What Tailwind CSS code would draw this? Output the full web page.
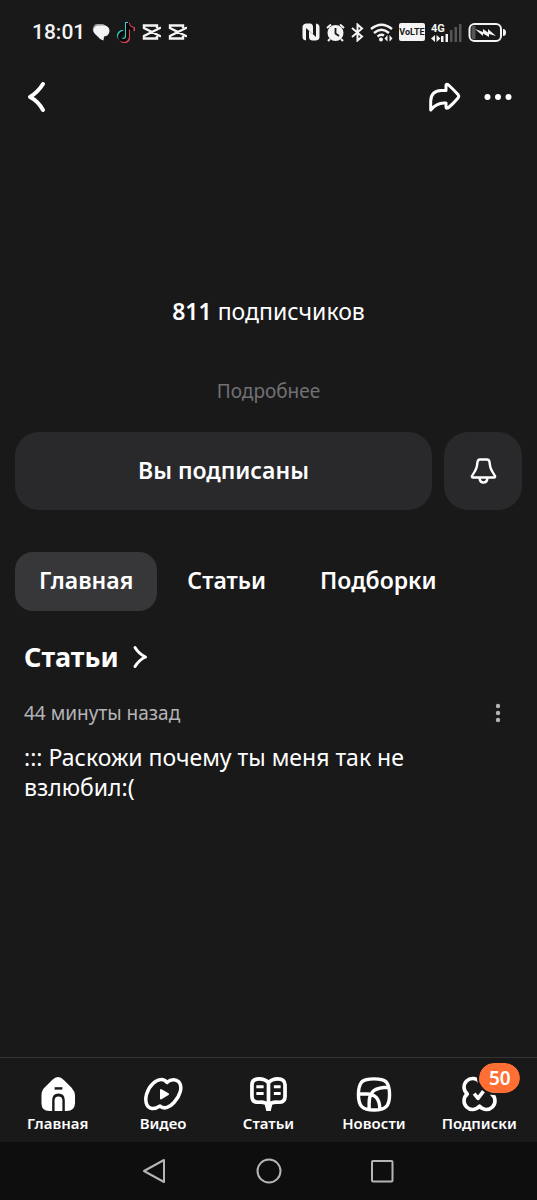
<!DOCTYPE html>
<html lang="ru">
<head>
<meta charset="utf-8">
<meta name="viewport" content="width=device-width, initial-scale=1">
<title>Канал</title>
<script src="https://cdn.jsdelivr.net/npm/@tailwindcss/browser@4"></script>
</head>
<body class="flex min-h-screen flex-col bg-[#19191a] font-['Noto_Sans',sans-serif] text-white">

<!-- Status bar -->
<div class="flex h-16 shrink-0 items-center justify-between pl-8 pr-[31px] text-[#f4f4f4]">
  <div class="flex items-center gap-[7px]">
    <span class="font-['Roboto',sans-serif] text-[21px] leading-6 font-medium">18:01</span>
    <svg class="h-[18px] w-[18px]" viewBox="0 0 18 18" aria-hidden="true"><path d="M5 1H11Q16 3 16 8Q15 13 11 13L10 16Q5 14 3 11Q0 8 1 5Q2 1 5 1Z" fill="#999"/><path d="M6 2.500H13Q17.500 3.500 17.500 8Q17 13 12 13.500L11.500 17.500Q7 16 5 12.500Q1.500 10 1.500 7Q2 3 6 2.500Z" fill="#f4f4f4"/></svg>
    <svg class="h-[22px] w-[18px]" viewBox="0 0 18 22" fill="none" stroke-width="3" aria-hidden="true"><path d="M9.500 1V15A4 4 0 1 1 6 10.500M9.500 2Q11 7 16 7" stroke="#35cfc7"/><path d="M11.500 2V16A4 4 0 0 1 4 18.500M11.500 3Q13 7.500 17.500 7.500V10" stroke="#e0425a"/><path d="M10.500 2V15.500A4 4 0 1 1 7 11.500M10.500 3Q12 8 16.500 8" stroke="#080808"/></svg>
    <svg class="h-[16px] w-[19px]" viewBox="0 0 19 16" fill="none" stroke="currentColor" stroke-width="2.400" aria-hidden="true"><path d="M19 3.500L2 12V14.500H15V12M19 12.500L2 4V1.500H15V4"/></svg>
    <svg class="h-[16px] w-[19px]" viewBox="0 0 19 16" fill="none" stroke="currentColor" stroke-width="2.400" aria-hidden="true"><path d="M19 3.500L2 12V14.500H15V12M19 12.500L2 4V1.500H15V4"/></svg>
  </div>
  <div class="flex items-center gap-[6px]">
    <svg class="h-[18px] w-[18px]" viewBox="0 0 18 18" aria-hidden="true"><path d="M4 0.500Q0.500 1 0.500 4V14Q0.500 17 4 17.500V5L11 11.500V4Q11 1 8.500 0.500ZM14 0.500Q17.500 1 17.500 4V14Q17.500 17 14 17.500H10Q7 17 7 14V7.500L14 14Z" fill="#f4f4f4"/></svg>
    <svg class="h-[19px] w-[19px]" viewBox="0 0 19 19" aria-hidden="true"><circle cx="9.500" cy="10" r="8" fill="#f4f4f4"/><path d="M1 5L5 1.500M18 5L14 1.500M4 16L2 18M15 16L17 18" stroke="#f4f4f4" stroke-width="2"/><path d="M9.500 5V10.500L13 13" fill="none" stroke="#19191a" stroke-width="1.800"/></svg>
    <svg class="h-[19px] w-[13px]" viewBox="0 0 13 19" fill="none" stroke="currentColor" stroke-width="2" aria-hidden="true"><path d="M1 5L11 13.500L6.500 17.500V1.500L11 5.500L1 14"/></svg>
    <svg class="h-[19px] w-[23px]" viewBox="0 0 23 19" fill="none" stroke="currentColor" stroke-width="2.400" aria-hidden="true"><path d="M1 6Q11.500 -2.500 22 6M4 10Q11.500 3.500 19 10M7.500 13.500Q11 10.500 14 12.500"/><circle cx="11" cy="16.500" r="2" fill="currentColor" stroke="none"/><path d="M17.500 12L14.500 15.500L17.500 18.500ZM19.500 12L22.500 15.500L19.500 18.500Z" fill="currentColor" stroke="none"/></svg>
    <span class="flex h-[18px] w-[26px] items-center justify-center rounded-[2px] bg-[#f4f4f4] font-['Roboto',sans-serif] text-[9px] leading-3 font-bold text-[#19191a]">VoLTE</span>
    <svg class="h-[19px] w-[31px]" viewBox="0 0 31 19" aria-hidden="true"><text x="0" y="9" font-family="Roboto, sans-serif" font-size="11" font-weight="700" fill="#f4f4f4">4G</text><path d="M4 12L0 15.500L4 19ZM5.500 12L9.500 15.500L5.500 19ZM10 13H12.500V19H10ZM14.500 11H17V19H14.500Z" fill="#f4f4f4"/><path d="M19 7H21.500V19H19ZM23.500 4H26V19H23.500ZM28 1H30.500V19H28Z" fill="#555557"/></svg>
    <svg class="h-[19px] w-[38px]" viewBox="0 0 38 19" aria-hidden="true"><rect x="1.500" y="1" width="31.500" height="17" rx="5" fill="none" stroke="#f4f4f4" stroke-width="2"/><path d="M5 3H7.500V16H5Q3.500 16 3.500 14V5Q3.500 3 5 3Z" fill="#555557"/><path d="M35 6Q38 6 38 9.500Q38 13 35 13Z" fill="#f4f4f4"/><path d="M7 6L15 9V6L20 9.500V6L28 13L21 11V14L15 10.500V13Z" fill="#f4f4f4"/></svg>
  </div>
</div>

<header class="flex h-[66px] shrink-0 items-center justify-between px-6">
  <button type="button" aria-label="Назад"><svg class="h-8 w-6" viewBox="0 0 24 32" fill="none" stroke="currentColor" stroke-width="4" stroke-linecap="round" stroke-linejoin="round"><path d="M19 3Q14 11 6 16Q14 20 19 29"/></svg></button>
  <div class="flex items-center gap-[22px]">
    <button type="button" aria-label="Поделиться"><svg class="h-8 w-[34px]" viewBox="0 0 34 32" fill="none" stroke="currentColor" stroke-width="3" stroke-linejoin="round"><path d="M2.700 29V20Q3 10 13 9.500H18V4.500Q18 2.500 20 3.500Q25 8 30 13.500Q31.500 15.300 30 17Q25 23 20 27Q18 28 18 26V22Q9 21 2.700 29Z"/></svg></button>
    <button type="button" aria-label="Ещё"><svg class="h-8 w-[29px]" viewBox="0 0 29 32" fill="currentColor"><circle cx="3.500" cy="16" r="3"/><circle cx="14" cy="16" r="3"/><circle cx="24.500" cy="16" r="3"/></svg></button>
  </div>
</header>

<main class="flex grow flex-col pt-[165px]">
  <p class="text-center text-[23px] leading-8"><b class="font-semibold">811</b> подписчиков</p>
  <button type="button" class="mt-[50px] self-center text-[19px] leading-7 text-[#717173]">Подробнее</button>
  <div class="mt-[27px] flex gap-3 px-[15px]">
    <button type="button" class="h-[78px] grow rounded-3xl bg-[#29292b] pb-[3px] text-[23px] leading-8 font-semibold">Вы подписаны</button>
    <button type="button" aria-label="Уведомления" class="flex h-[78px] w-[78px] shrink-0 items-center justify-center rounded-3xl bg-[#29292b]"><svg class="h-7 w-[27px]" viewBox="0 0 27 28" fill="none" stroke="currentColor" stroke-width="2.400" stroke-linejoin="round"><path d="M10 2.500H17Q19 2.500 19.500 5Q20 11 22 14L25 19Q25.500 20.500 24 20.500H3Q1.500 20.500 2 19L5 14Q7 11 7.500 5Q8 2.500 10 2.500ZM9.500 21Q10 25.500 13.500 25.500Q17 25.500 17.500 21"/></svg></button>
  </div>
  <nav aria-label="Разделы канала" class="mt-[42px] flex gap-[6px] px-[15px] text-[23px] leading-8 font-semibold">
    <a href="#main" aria-current="page" class="flex h-[59px] items-center rounded-[18px] bg-[#373739] px-6 pb-[3px]">Главная</a>
    <a href="#articles" class="flex h-[59px] items-center px-6 pb-[3px]">Статьи</a>
    <a href="#collections" class="flex h-[59px] items-center px-6 pb-[3px]">Подборки</a>
  </nav>
  <section id="articles" class="px-6 pt-7">
    <h2 class="text-[27px] leading-9 font-bold"><a href="#all-articles" class="inline-flex items-center gap-3">Статьи <svg class="h-6 w-[18px]" viewBox="0 0 18 24" fill="none" stroke="currentColor" stroke-width="3" stroke-linecap="round" stroke-linejoin="round" aria-hidden="true"><path d="M4 2.500Q8 9 14.500 12Q8 15 4 21.500"/></svg></a></h2>
    <article class="mt-6">
      <div class="flex h-7 items-center justify-between text-[#b4b4b6]">
        <time class="text-[19px] leading-7">44 минуты назад</time>
        <button type="button" aria-label="Меню статьи" class="pr-3"><svg class="h-5 w-[6px]" viewBox="0 0 6 20" fill="currentColor"><circle cx="3" cy="3" r="2.200"/><circle cx="3" cy="10" r="2.200"/><circle cx="3" cy="17" r="2.200"/></svg></button>
      </div>
      <p class="mt-[15px] max-w-[420px] text-[23px] leading-[30px]">::: Раскожи почему ты меня так не взлюбил:(</p>
    </article>
  </section>
</main>

<nav aria-label="Основная навигация" class="grid h-[85px] shrink-0 grid-cols-5 border-t border-[#343436] px-[5px] pt-[18px] text-center text-[15px] leading-5 font-semibold">
  <a href="#home" class="flex flex-col items-center gap-px">
    <svg class="h-9 w-9" viewBox="0 0 36 37" aria-hidden="true"><path d="M18 1Q21 1 24 4L32 12Q35.500 16 35.500 20V28Q35 36 27 36H25V25Q25 18 18.500 18Q12 18 12 25V36H9Q1 36 1 28V20Q1 15 4 12L12 4Q15 1 18 1Z" fill="currentColor"/><path d="M14.500 11.500H22.500V14H14.500Z" fill="#19191a"/><path d="M14.500 25Q14.500 21 18.500 21Q22.500 21 22.500 25V36H14.500Z" fill="currentColor"/></svg>Главная</a>
  <a href="#video" class="flex flex-col items-center gap-px">
    <svg class="h-9 w-10" viewBox="0 0 40 36" fill="none" stroke="currentColor" stroke-width="3.500" stroke-linejoin="round" aria-hidden="true"><path d="M24 6.500C28 3 33 3 36 6C40 11 37 20 31 26.500C27 31 21 34 17 30C11 34 6 33 4 29C1 23 4 13 10 7.500C15 2.500 21 2.500 24 6.500Z"/><path d="M18 14V22.500L25 18.200Z" fill="currentColor" stroke-width="2"/></svg>Видео</a>
  <a href="#read" class="flex flex-col items-center gap-px">
    <svg class="h-9 w-10" viewBox="0 0 40 37" fill="none" stroke="currentColor" stroke-width="3.800" aria-hidden="true"><path d="M20.500 7Q17 3 11 3Q3.500 3 3.500 9V21Q3.500 27 10 27Q17 26 20.500 30Q24 26 31 27Q37.500 27 37.500 21V9Q37.500 3 30 3Q24 3 20.500 7ZM20.500 7V36"/><path d="M16 27H25L22.800 36H18.300Z" fill="currentColor" stroke="none"/><path d="M8 11H15.500M8 18H15.500M26 11H33M26 18H33" stroke-width="3.200"/></svg>Статьи</a>
  <a href="#news" class="flex flex-col items-center gap-px">
    <svg class="h-9 w-[38px]" viewBox="0 0 38 37" fill="none" stroke="currentColor" stroke-width="3.500" aria-hidden="true"><path d="M19 3Q28 3 31.500 6Q35 10 35 19Q35 28 31.500 31.500Q28 35 19 35Q10 35 6.500 31.500Q3 28 3 19Q3 10 6.500 6Q10 3 19 3ZM3 18.500H11Q25 18 25 34.500M14 35V28C14 15 21 11.500 34 11.500"/></svg>Новости</a>
  <a href="#subscriptions" class="relative flex flex-col items-center gap-px">
    <svg class="h-9 w-[37px]" viewBox="0 0 37 37" fill="none" stroke="currentColor" stroke-width="3.700" stroke-linejoin="round" aria-hidden="true"><path d="M18.500 6A8.900 8.900 0 1 1 31 18.500A8.900 8.900 0 1 1 18.500 31A8.900 8.900 0 1 1 6 18.500A8.900 8.900 0 1 1 18.500 6Z"/><path d="M13 18L17 23L23 15"/></svg>Подписки
    <span class="absolute -top-[15px] left-1/2 -ml-[2px] box-content flex h-[30px] w-[41px] items-center justify-center rounded-full border-2 border-[#19191a] bg-[#ff6e33] bg-clip-padding text-[19px] leading-6">50</span>
  </a>
</nav>

<!-- System navigation -->
<div class="flex h-[58px] shrink-0 items-center justify-center gap-[88px] bg-[#0e0e0f] text-[#b5b5b6]">
  <button type="button" aria-label="Системная: назад"><svg class="h-[26px] w-[26px]" viewBox="0 0 26 26" fill="none" stroke="currentColor" stroke-width="2" stroke-linejoin="round"><path d="M2 13L22 2V24Z"/></svg></button>
  <button type="button" aria-label="Системная: домой"><svg class="h-[26px] w-[26px]" viewBox="0 0 26 26" fill="none" stroke="currentColor" stroke-width="2"><circle cx="13" cy="13" r="11.500"/></svg></button>
  <button type="button" aria-label="Системная: недавние"><svg class="h-[26px] w-[26px]" viewBox="0 0 26 26" fill="none" stroke="currentColor" stroke-width="2"><rect x="2" y="3" width="20.500" height="20.500" rx="1"/></svg></button>
</div>
</body>
</html>
